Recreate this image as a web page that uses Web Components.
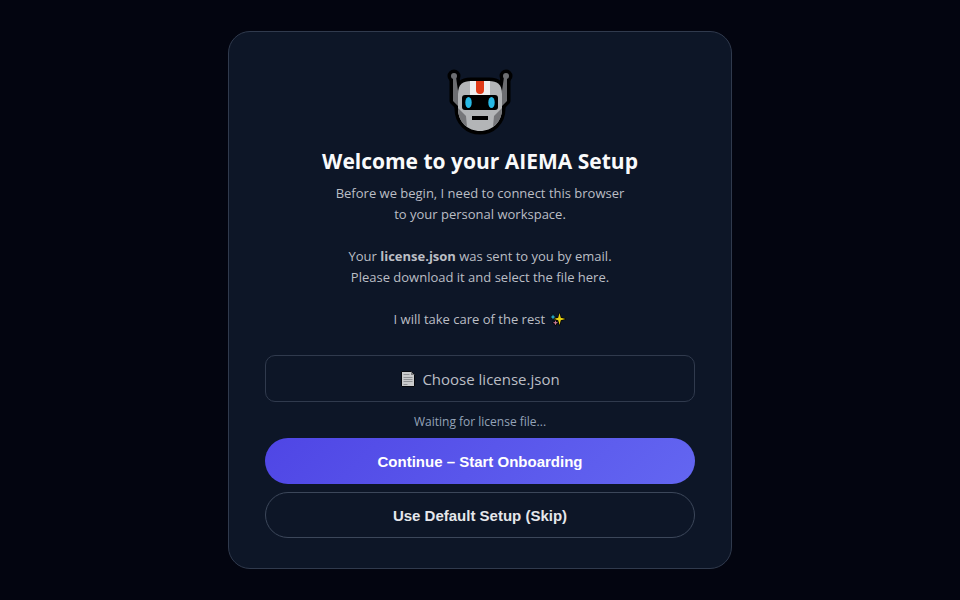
<!DOCTYPE html>
<html lang="en">
<head>
<meta charset="utf-8">
<meta name="viewport" content="width=device-width, initial-scale=1">
<title>AIEMA Setup</title>
<style>
  body {
      margin: 0;
      background: #030510;
      color: #f9fafb;
      font-family: "Open Sans", "Noto Sans", sans-serif;
  }
</style>
</head>
<body>
<template id="setup-card-template">
 <style>
  :host {
      display: grid;
      place-items: center;
      min-height: 100vh;
      padding: 24px;
      box-sizing: border-box;
  }
  .card {
      width: 100%;
      max-width: 504px;
      box-sizing: border-box;
      padding: 36px 36px 30px;
      border: 1px solid #303a4d;
      border-radius: 22px;
      background: #0d1627;
      text-align: center;
  }
  h1 {
      margin: 10px 0 6px;
      font-size: 21px;
      line-height: 32px;
      font-weight: 700;
  }
  .actions {
      display: flex;
      flex-direction: column;
      gap: 8px;
  }
 </style>
 <main class="card">
  <slot name="logo"></slot>
  <h1><slot name="title"></slot></h1>
  <slot></slot>
  <div class="actions"><slot name="actions"></slot></div>
 </main>
</template>

<template id="robot-logo-template">
 <style>
  :host { display: block; }
  svg { display: block; margin: 0 auto; }
 </style>
 <svg width="66" height="67" viewBox="0 -1 66 67" role="img" aria-label="Robot">
  <g fill="#000" stroke="#000" stroke-width="7" stroke-linejoin="round">
   <circle cx="7" cy="7" r="3"/>
   <circle cx="59" cy="7" r="3"/>
   <path d="M6 8h3l2 14v15l-5-5zM60 8h-3l-2 14v15l5-5z"/>
   <path d="M11 25C11 15 16 12 24 12h18c8 0 13 3 13 13v15c0 13-10 22-22 22S11 53 11 40z"/>
  </g>
  <g fill="#6d6e71">
   <circle cx="7" cy="7" r="3"/>
   <circle cx="59" cy="7" r="3"/>
   <path d="M6 8h3l2 14v15l-5-5zM60 8h-3l-2 14v15l5-5z"/>
  </g>
  <path fill="#b3b5b7" d="M11 25C11 15 16 12 24 12h18c8 0 13 3 13 13v15c0 13-10 22-22 22S11 53 11 40z"/>
  <path fill="#eeeff0" d="M23 12h20v16H23z"/>
  <path fill="#e03a18" d="M29 12h8v9a4 4 0 0 1-8 0z"/>
  <path fill="#76777a" d="M11 39l8 8 1 11C14 54 11 47 11 39zM55 39l-8 8-1 11c6-4 9-11 9-19z"/>
  <rect x="15" y="26" width="36" height="15" rx="3"/>
  <ellipse cx="21.500" cy="33.500" rx="3.200" ry="5.500" fill="#27b9e5"/>
  <ellipse cx="44.500" cy="33.500" rx="3.200" ry="5.500" fill="#27b9e5"/>
  <rect x="25" y="47" width="16" height="4"/>
 </svg>
</template>

<template id="intro-text-template">
 <style>
  :host {
      display: block;
      margin-bottom: 25px;
      color: #bbbec5;
      font-size: 13px;
      font-weight: 500;
      line-height: 21px;
  }
  ::slotted(p) { margin: 0 0 21px; }
  ::slotted(p:last-of-type) { margin: 0; }
 </style>
 <slot></slot>
</template>

<template id="sparkle-icon-template">
 <style>
  :host { display: inline-block; margin-left: 2px; vertical-align: -3px; }
  svg { display: block; }
 </style>
 <svg width="16" height="16" viewBox="0 0 16 16" role="img" aria-label="sparkles" stroke="#000" stroke-width="1.200" stroke-linejoin="round" paint-order="stroke">
  <path fill="#e5cf12" d="M9.500 2l1.300 4.700L15.500 8l-4.700 1.300L9.500 14 8.200 9.300 3.500 8l4.700-1.300z"/>
  <path fill="#28a9c9" d="M3 3l.8 2.200L6 6l-2.200.8L3 9l-.8-2.200L0 6l2.200-.8z"/>
  <path fill="#c57996" d="M5.500 9l.7 2 2 .8-2 .8-.7 2-.7-2-2-.8 2-.8z"/>
 </svg>
</template>

<template id="license-picker-template">
 <style>
  :host { display: block; }
  label {
      display: flex;
      align-items: center;
      justify-content: center;
      gap: 6px;
      height: 47px;
      box-sizing: border-box;
      border: 1px solid #303a4d;
      border-radius: 10px;
      color: #bbbec5;
      font-size: 15px;
      cursor: pointer;
  }
  label:focus-within { border-color: #6366f1; }
  input {
      position: absolute;
      width: 1px;
      height: 1px;
      opacity: 0;
  }
  .status {
      margin: 10px 0 7px;
      color: #94a3b8;
      font-size: 12px;
      line-height: 19px;
  }
 </style>
 <label for="file">
  <svg width="16" height="18" viewBox="0 0 16 18" aria-hidden="true">
   <path fill="#c9cacb" stroke="#05070c" d="M1.500 1.500h10l3 3v12h-13z"/>
   <path fill="#77787b" d="M11 1.500v3.500h3.500z"/>
   <path stroke="#8e9093" d="M3.500 4.500h6M3.500 7.500h9M3.500 9.500h9M3.500 11.500h9M3.500 14.500h4"/>
  </svg>
  <span>Choose license.json</span>
  <input id="file" type="file" accept=".json,application/json">
 </label>
 <div class="status" role="status">Waiting for license file...</div>
</template>

<template id="pill-button-template">
 <style>
  :host { display: block; }
  button {
      display: block;
      width: 100%;
      height: 46px;
      padding: 0 16px;
      border: 1px solid #3c475a;
      border-radius: 23px;
      background: transparent;
      color: #e5e7eb;
      font: bold 15px "Liberation Sans", Arial, sans-serif;
      cursor: pointer;
  }
  :host([primary]) button {
      border: 0;
      background: linear-gradient(135deg, #4f46e5, #6366f1);
      color: #fff;
  }
 </style>
 <button type="button"><slot></slot></button>
</template>

<setup-card>
 <robot-logo slot="logo"></robot-logo>
 <span slot="title">Welcome to your AIEMA Setup</span>
 <intro-text>
  <p>Before we begin, I need to connect this browser<br>to your personal workspace.</p>
  <p>Your <strong>license.json</strong> was sent to you by email.<br>Please download it and select the file here.</p>
  <p>I will take care of the rest <sparkle-icon></sparkle-icon></p>
 </intro-text>
 <license-picker></license-picker>
 <pill-button slot="actions" primary>Continue – Start Onboarding</pill-button>
 <pill-button slot="actions">Use Default Setup (Skip)</pill-button>
</setup-card>

<script>
 class TemplateElement extends HTMLElement {
     constructor() {
         super();
         this.attachShadow({ mode: 'open' });
         this.shadowRoot.appendChild(document.getElementById(this.localName + '-template').content.cloneNode(true));
     }
 }

 customElements.define('setup-card', class SetupCard extends TemplateElement {});
 customElements.define('robot-logo', class RobotLogo extends TemplateElement {});
 customElements.define('intro-text', class IntroText extends TemplateElement {});
 customElements.define('sparkle-icon', class SparkleIcon extends TemplateElement {});
 customElements.define('pill-button', class PillButton extends TemplateElement {});

 customElements.define('license-picker', class LicensePicker extends TemplateElement {
     connectedCallback() {
         const input = this.shadowRoot.querySelector('input');
         input.addEventListener('change', () => {
             const file = input.files[0];
             this.shadowRoot.querySelector('.status').textContent = file ? file.name : 'Waiting for license file...';
         });
     }
 });
</script>
</body>
</html>
